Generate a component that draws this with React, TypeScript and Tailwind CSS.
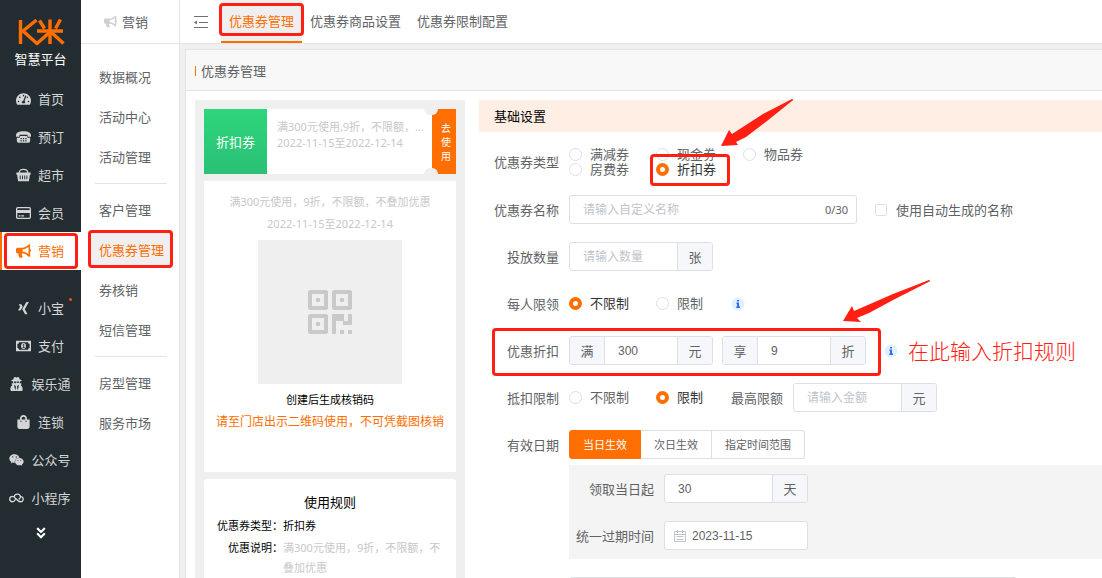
import { useState } from "react";
import type { ComponentType, ReactNode } from "react";
import {
    FaAngleDoubleDown,
    FaBullhorn,
    FaShoppingBag,
    FaTachometerAlt,
    FaUserSecret,
    FaWeixin,
    FaXing,
} from "react-icons/fa";

type IconProps = { className?: string };

type NavItem = {
    label: string;
    icon: ComponentType<IconProps>;
    dot?: boolean;
};

const PhoneIcon = ({ className }: IconProps) => (
    <svg viewBox="0 0 14 12" className={className} fill="currentColor">
        <path d="M0 4.6C0 1.6 3 .6 7 .6s7 1 7 4v1.2h-3.2V3.900H3.200v1.900H0z" />
        <path fillRule="evenodd" d="M4 5h6l.8 1.600h2.400v3.200q0 1.600-1.600 1.600H2.400Q.8 11.400.8 9.800V6.600h2.400zM4.200 7v1.200h1.200V7zm2.200 0v1.200h1.200V7zm2.200 0v1.200h1.200V7zM4.200 9v1.200h1.200V9zm2.200 0v1.200h1.200V9zm2.200 0v1.200h1.200V9z" />
    </svg>
);

const BasketIcon = ({ className }: IconProps) => (
    <svg viewBox="0 0 16 14" className={className}>
        <path d="M3.400 5C3.400 2 5 .9 8 .9S12.600 2 12.600 5" fill="none" stroke="currentColor" strokeWidth="1.300" />
        <path fill="currentColor" fillRule="evenodd" d="M.4 4.200h15.200v2.400h-.8l-1 7H2.200l-1-7H.4zM4 7.600v4h1v-4zm2.400 0v4h1v-4zm2.400 0v4h1v-4zm2.300 0v4h1v-4z" />
    </svg>
);

const CardIcon = ({ className }: IconProps) => (
    <svg viewBox="0 0 16 13" className={className}>
        <rect x=".7" y=".7" width="14.600" height="11.600" rx="1.200" fill="none" stroke="currentColor" strokeWidth="1.400" />
        <path d="M1 3.200h14v3.200H1zM2.800 9h2v1.300h-2zM5.600 9h3v1.300h-3z" fill="currentColor" />
    </svg>
);

const MoneyIcon = ({ className }: IconProps) => (
    <svg viewBox="0 0 16 11" className={className}>
        <path fill="currentColor" fillRule="evenodd" d="M0 0h16v11H0zM3.300 1.500Q3.300 3.300 1.500 3.300v4.400q1.800 0 1.800 1.800h9.400q0-1.800 1.800-1.800V3.300q-1.800 0-1.800-1.800z" />
        <ellipse cx="8" cy="5.500" rx="2.600" ry="3.200" fill="currentColor" />
        <path d="M7.200 4.200 8.200 3.600v3.600M7 7.200h2.200" fill="none" stroke="#232d31" strokeWidth=".9" />
    </svg>
);

const MiniProgramIcon = ({ className }: IconProps) => (
    <svg viewBox="0 0 16 10" className={className} fill="none" stroke="currentColor" strokeWidth="1.400" strokeLinecap="round">
        <path d="M6.800 6.600C6 8.200 5 9 3.700 9A2.900 2.900 0 0 1 3.700 3.200C6.500 3.200 8.500 9 12 9a2.800 2.800 0 0 0 1-5.500M5.600 3.500C6 1.700 7.300.9 8.900.9c2 0 3.300 1.500 3.300 3.100 0 1-.6 1.800-1.400 2.200" />
    </svg>
);

const CollapseIcon = ({ className }: IconProps) => (
    <svg viewBox="0 0 14 12" className={className}>
        <path d="M0 .5h14M5 6.500H14M0 11.500h14" stroke="currentColor" fill="none" />
        <path d="M0 6.500l3-2v4z" fill="currentColor" />
    </svg>
);

const QrIcon = ({ className }: IconProps) => (
    <svg viewBox="0 0 44 44" className={className} fill="#c9c9c9">
        <g fill="none" stroke="#c9c9c9" strokeWidth="4" strokeLinejoin="round">
            <path d="M2 2h16v16H2zM26 2h16v16H26zM2 26h16v16H2z" />
        </g>
        <circle cx="10" cy="10" r="2.300" />
        <circle cx="34" cy="10" r="2.300" />
        <circle cx="10" cy="34" r="2.300" />
        <path d="M25 24h11v7h4v-7h3q1 0 1 1v9q0 1-1 1h-8v-4h-7v12q0 1-1 1h-2q-1 0-1-1V25q0-1 1-1zM32 40h4v4h-4zM40 40h4v3q0 1-1 1h-3z" />
    </svg>
);

const CalendarIcon = ({ className }: IconProps) => (
    <svg viewBox="0 0 12 12" className={className} fill="none" stroke="#c0c4cc">
        <path d="M.5 1.500h11v10H.5zM.5 4.500h11M3.500 0v3M8.500 0v3M2.500 6.500h7M2.500 9.500h7" />
    </svg>
);

const Logo = () => (
    <svg viewBox="0 0 48 28" className="w-12 h-7" fill="none" stroke="#ff6e00" strokeWidth="3.400" strokeLinejoin="round">
        <path d="M3.500 2v24M19.500 2 6 13 20 25.500 33 14" />
        <path d="M22.500 2.500 27.500 10.500M43.500 1.500 38.500 10.500M20 13h26M33 1.500v24.500M34 14l12.500 11.500" />
    </svg>
);

const InfoIcon = () => (
    <svg viewBox="0 0 14 14" className="w-[14px] h-[14px] shrink-0">
        <circle cx="7" cy="7" r="6.500" fill="#e2efff" />
        <path d="M6 3h2v1.600H6zM5.500 5.600H8v4h1V11H5.300V9.600H6V7h-.5z" fill="#2d6cf6" />
    </svg>
);

const topNav: NavItem[] = [
    { label: "首页", icon: FaTachometerAlt },
    { label: "预订", icon: PhoneIcon },
    { label: "超市", icon: BasketIcon },
    { label: "会员", icon: CardIcon },
    { label: "营销", icon: FaBullhorn },
];

const bottomNav: NavItem[] = [
    { label: "小宝", icon: FaXing, dot: true },
    { label: "支付", icon: MoneyIcon },
    { label: "娱乐通", icon: FaUserSecret },
    { label: "连锁", icon: FaShoppingBag },
    { label: "公众号", icon: FaWeixin },
    { label: "小程序", icon: MiniProgramIcon },
];

const menuGroups = [
    ["数据概况", "活动中心", "活动管理"],
    ["客户管理", "优惠券管理", "券核销", "短信管理"],
    ["房型管理", "服务市场"],
];

const tabs = ["优惠券管理", "优惠券商品设置", "优惠券限制配置"];
const couponTypes = ["满减券", "现金券", "物品券", "房费券", "折扣券"];
const dateModes = ["当日生效", "次日生效", "指定时间范围"];

// Red frame drawn over its nearest positioned parent
const Mark = ({ className }: { className: string }) => (
    <span className={`absolute z-10 border-[3px] border-[#ff2013] rounded-[4px] pointer-events-none ${className}`} />
);

const SideLink = ({ item, active }: { item: NavItem; active?: boolean }) => {
    const Icon = item.icon;
    return (
        <a
            href="#"
            className={`relative flex items-center justify-center gap-[7px] pr-px h-[38px] ${active ? "bg-white text-[#ff6e00]" : "text-[#d3d5d6]"}`}
        >
            {active && <span className="absolute left-0 inset-y-0 w-[2px] bg-[#ff6e00]" />}
            <Icon className="w-[15px] h-[14px] shrink-0" />
            <span className="relative">
                {item.label}
                {item.dot && <span className="absolute -right-2 top-0 w-[3px] h-[3px] rounded-full bg-[#ff4a1a]" />}
            </span>
            {active && <Mark className="left-1 right-[3px] inset-y-[1px]" />}
        </a>
    );
};

const Row = ({ label, htmlFor, children }: { label: string; htmlFor?: string; children: ReactNode }) => (
    <div className="flex items-center gap-[10px] min-h-[29px]">
        <label htmlFor={htmlFor} className="w-20 shrink-0 text-right">{label}</label>
        {children}
    </div>
);

type RadioProps = {
    name: string;
    label: string;
    checked: boolean;
    onChange: () => void;
    children?: ReactNode;
};

const Radio = ({ name, label, checked, onChange, children }: RadioProps) => (
    <label className={`relative flex items-center gap-2 w-[87px] h-[15px] leading-[15px] ${checked ? "text-[#303133]" : ""}`}>
        <input
            type="radio"
            name={name}
            checked={checked}
            onChange={onChange}
            className="appearance-none w-[13px] h-[13px] shrink-0 rounded-full bg-white border border-[#dcdfe6] checked:border-4 checked:border-[#ff6e00]"
        />
        {label}
        {children}
    </label>
);

type UnitInputProps = {
    id?: string;
    label: string;
    prefix?: string;
    suffix: string;
    defaultValue?: string;
    placeholder?: string;
};

const UnitInput = ({ id, label, prefix, suffix, defaultValue, placeholder }: UnitInputProps) => (
    <div className="flex w-36 h-[29px] border border-[#dcdfe6] rounded-[3px] bg-white overflow-hidden">
        {prefix && (
            <span className="w-[35px] shrink-0 flex items-center justify-center bg-[#f5f7fa] border-r border-[#dcdfe6]">{prefix}</span>
        )}
        <input
            id={id}
            aria-label={label}
            defaultValue={defaultValue}
            placeholder={placeholder}
            className="flex-1 min-w-0 px-[13px] text-xs font-['Liberation_Sans','Noto_Sans_CJK_SC',sans-serif] placeholder:text-[#c0c4cc] focus:outline-none"
        />
        <span className="w-[35px] shrink-0 flex items-center justify-center bg-[#f5f7fa] border-l border-[#dcdfe6]">{suffix}</span>
    </div>
);

const CouponPreview = () => (
    <section className="w-[270px] shrink-0 bg-[#efefef] px-[9px] pt-[9px] flex flex-col gap-[7px] text-[11px]">
        <div className="flex h-[65px] bg-white shrink-0">
            <div className="w-[63px] shrink-0 flex items-center justify-center text-white text-[13px] bg-linear-to-b from-[#2dd67c] to-[#2bc076]">
                折扣券
            </div>
            <div className="flex-1 min-w-0 pl-[10px] pt-[10px] leading-4 text-[#c8c8c8] whitespace-nowrap">
                <p>满300元使用,9折，不限额，...</p>
                <p>2022-11-15至2022-12-14</p>
            </div>
            <button className="relative w-6 shrink-0 pl-1 bg-[#ff6e00] text-white text-[10px] leading-[14px]">
                <span className="block w-[10px] mx-auto">去使用</span>
                <span className="absolute -left-2 top-0 w-[14px] h-[6px] rounded-b-full bg-[#efefef]" />
                <span className="absolute -left-2 bottom-0 w-[14px] h-[6px] rounded-t-full bg-[#efefef]" />
            </button>
        </div>

        <div className="bg-white h-[291px] shrink-0 pt-[10px] flex flex-col items-center text-center leading-[22px]">
            <p className="text-[#c8c8c8]">满300元使用，9折，不限额，不叠加优惠</p>
            <p className="text-[#c8c8c8]">2022-11-15至2022-12-14</p>
            <div className="w-36 h-36 mt-[5px] mb-[5px] bg-[#efefef] flex items-center justify-center">
                <QrIcon className="w-11 h-11" />
            </div>
            <p className="text-black">创建后生成核销码</p>
            <p className="text-xs leading-[22px] text-[#ff6e00] whitespace-nowrap">请至门店出示二维码使用，不可凭截图核销</p>
        </div>

        <div className="bg-white rounded-t-[3px] flex-1 px-[13px] pt-3 text-black">
            <h3 className="text-[13px] leading-[22px] text-center">使用规则</h3>
            <dl className="grid grid-cols-[66px_1fr] gap-y-[2px] mt-[3px] leading-5">
                <dt className="text-right whitespace-nowrap">优惠券类型：</dt>
                <dd>折扣券</dd>
                <dt className="text-right whitespace-nowrap">优惠说明：</dt>
                <dd className="text-[#c8c8c8]">满300元使用，9折，不限额，不叠加优惠</dd>
            </dl>
        </div>
    </section>
);

const CouponForm = () => {
    const [type, setType] = useState("折扣券");
    const [name, setName] = useState("");
    const [claimLimited, setClaimLimited] = useState(false);
    const [deductLimited, setDeductLimited] = useState(true);
    const [dateMode, setDateMode] = useState("当日生效");

    return (
        <section className="flex-1 min-w-0">
            <h2 className="h-8 flex items-center px-[15px] bg-[#feeee3] text-black">基础设置</h2>

            <form className="flex flex-col gap-[18px] pt-[15px]" onSubmit={(e) => e.preventDefault()}>
                <Row label="优惠券类型">
                    <div className="relative grid grid-cols-[87px_87px_87px]">
                        {couponTypes.map((t) => (
                            <Radio key={t} name="type" label={t} checked={type === t} onChange={() => setType(t)}>
                                {t === "折扣券" && <Mark className="-left-[6px] -top-2 w-20 h-8" />}
                            </Radio>
                        ))}
                        <svg viewBox="0 0 72 48" className="absolute z-10 left-[152px] -top-12 w-[72px] h-12" fill="#ff2013">
                            <path d="M71 0Q73 0 71.500 1.500L46 22 25 38 15 43l2 3L0 47 8 31l3 4L42 15Z" />
                        </svg>
                    </div>
                </Row>

                <Row label="优惠券名称" htmlFor="coupon-name">
                    <div className="flex items-center w-72 h-[29px] pr-2 border border-[#dcdfe6] rounded-[3px] bg-white">
                        <input
                            id="coupon-name"
                            maxLength={30}
                            value={name}
                            onChange={(e) => setName(e.target.value)}
                            placeholder="请输入自定义名称"
                            className="flex-1 min-w-0 pl-[13px] text-xs placeholder:text-[#c0c4cc] focus:outline-none"
                        />
                        <span className="text-[11px]">{name.length}/30</span>
                    </div>
                    <label className="flex items-center gap-[9px] ml-2">
                        <input type="checkbox" className="appearance-none w-3 h-3 bg-white border border-[#dcdfe6] rounded-[2px] checked:bg-[#ff6e00]" />
                        使用自动生成的名称
                    </label>
                </Row>

                <Row label="投放数量" htmlFor="coupon-count">
                    <UnitInput id="coupon-count" label="投放数量" suffix="张" placeholder="请输入数量" />
                </Row>

                <Row label="每人限领">
                    <div className="flex items-center">
                        <Radio name="claim" label="不限制" checked={!claimLimited} onChange={() => setClaimLimited(false)} />
                        <Radio name="claim" label="限制" checked={claimLimited} onChange={() => setClaimLimited(true)} />
                    </div>
                    <span className="-ml-[22px]">
                        <InfoIcon />
                    </span>
                </Row>

                <div className="relative">
                    <Row label="优惠折扣" htmlFor="discount-over">
                        <div className="flex gap-[9px]">
                            <UnitInput id="discount-over" label="满" prefix="满" suffix="元" defaultValue="300" />
                            <UnitInput label="享" prefix="享" suffix="折" defaultValue="9" />
                        </div>
                        <span className="ml-2">
                            <InfoIcon />
                        </span>
                        <strong className="text-[21px] font-light text-[#ff2013] whitespace-nowrap">在此输入折扣规则</strong>
                    </Row>
                    <Mark className="left-[13px] -top-2 w-[389px] h-12" />
                    <svg viewBox="0 0 88 42" className="absolute z-10 left-[364px] -top-14 w-[88px] h-[42px]" fill="#ff2013">
                        <path d="M86 0Q88 0 86.500 1.500L52 19 26 33 14 38l4 4L0 41 9 26l2 5L50 14Z" />
                    </svg>
                </div>

                <Row label="抵扣限制">
                    <div className="flex items-center">
                        <Radio name="deduct" label="不限制" checked={!deductLimited} onChange={() => setDeductLimited(false)} />
                        <Radio name="deduct" label="限制" checked={deductLimited} onChange={() => setDeductLimited(true)} />
                    </div>
                    <label htmlFor="max-amount" className="-ml-[22px]">最高限额</label>
                    <UnitInput id="max-amount" label="最高限额" suffix="元" placeholder="请输入金额" />
                </Row>

                <div className="flex flex-col gap-[6px]">
                    <Row label="有效日期">
                        <div className="flex h-[29px] text-[11px]">
                            {dateModes.map((mode) => (
                                <button
                                    key={mode}
                                    type="button"
                                    onClick={() => setDateMode(mode)}
                                    className={`px-[13px] border border-l-0 first:border-l first:rounded-l-[3px] last:rounded-r-[3px] ${mode === dateMode
                                        ? "bg-[#ff6e00] border-[#ff6e00] text-white"
                                        : "bg-white border-[#dcdfe6]"
                                        }`}
                                >
                                    {mode}
                                </button>
                            ))}
                        </div>
                    </Row>
                    <div className="ml-[90px] py-[9px] flex flex-col gap-[18px] bg-[#f4f4f4]">
                        <div className="flex items-center gap-[10px]">
                            <label htmlFor="valid-days" className="w-[85px] text-right">领取当日起</label>
                            <UnitInput id="valid-days" label="领取当日起" suffix="天" defaultValue="30" />
                        </div>
                        <div className="flex items-center gap-[10px]">
                            <label htmlFor="expire-date" className="w-[85px] text-right">统一过期时间</label>
                            <div className="flex items-center gap-[6px] w-36 h-[29px] pl-[9px] border border-[#dcdfe6] rounded-[3px] bg-white">
                                <CalendarIcon className="w-3 h-3 shrink-0" />
                                <input
                                    id="expire-date"
                                    defaultValue="2023-11-15"
                                    className="flex-1 min-w-0 text-xs font-['Liberation_Sans',sans-serif] focus:outline-none"
                                />
                            </div>
                        </div>
                    </div>
                </div>

                <textarea aria-label="优惠说明" className="ml-[90px] w-[448px] h-20 border border-[#dcdfe6] rounded-[3px] resize-none" />
            </form>
        </section>
    );
};

export default function App() {
    return (
        <div className="flex h-screen overflow-hidden bg-white text-[13px] leading-5 text-[#606266] font-['Noto_Sans','Noto_Sans_CJK_SC',sans-serif]">
            {/* Primary navigation */}
            <nav className="w-[81px] shrink-0 bg-[#232d31] flex flex-col">
                <div className="h-20 shrink-0 pt-[18px] flex flex-col items-center gap-[3px] text-white">
                    <Logo />
                    <span>智慧平台</span>
                </div>
                {topNav.map((item) => (
                    <SideLink key={item.label} item={item} active={item.label === "营销"} />
                ))}
                <div className="h-[19px] shrink-0" />
                {bottomNav.map((item) => (
                    <SideLink key={item.label} item={item} />
                ))}
                <button aria-label="更多" className="h-8 shrink-0 flex items-center justify-center text-white">
                    <FaAngleDoubleDown className="w-[14px] h-[14px]" />
                </button>
            </nav>

            {/* Secondary menu */}
            <aside className="w-[99px] shrink-0 border-r border-[#e4e4e4]">
                <div className="h-11 flex items-center justify-center gap-[5px] pr-2 border-b border-[#e4e4e4]">
                    <FaBullhorn className="w-[13px] h-[13px] text-[#cfcfcf]" />
                    营销
                </div>
                <div className="pt-[13px] pl-[14px] pr-3">
                    {menuGroups.map((group, index) => (
                        <div key={group[0]} className={index > 0 ? "mt-[6px] pt-[6px] border-t border-[#e4e4e4]" : ""}>
                            {group.map((label) => {
                                const active = label === "优惠券管理";
                                return (
                                    <a key={label} href="#" className="relative flex items-center h-10 whitespace-nowrap">
                                        {active && <span className="absolute -left-[5px] -right-[5px] inset-y-[2px] bg-[#efefef]" />}
                                        <span className={`relative pl-1 ${active ? "text-[#ff6e00]" : ""}`}>{label}</span>
                                        {active && <Mark className="-left-[7px] -right-[6px] top-0 bottom-[2px]" />}
                                    </a>
                                );
                            })}
                        </div>
                    ))}
                </div>
            </aside>

            <main className="flex-1 min-w-0 flex flex-col">
                <header className="h-11 shrink-0 flex items-center border-b border-[#e4e4e4] pl-[14px]">
                    <button aria-label="收起菜单" className="mr-[13px] text-[#707070]">
                        <CollapseIcon className="w-[14px] h-3" />
                    </button>
                    {tabs.map((tab, index) => (
                        <a
                            key={tab}
                            href="#"
                            className={`relative h-full px-2 flex items-center border-b-2 ${index === 0 ? "bg-[#efefef] border-[#ff6e00] text-[#ff6e00]" : "border-transparent"}`}
                        >
                            {tab}
                            {index === 0 && <Mark className="-left-[2px] -right-[2px] top-[3px] bottom-[5px]" />}
                        </a>
                    ))}
                </header>

                <div className="flex-1 min-h-0 pl-[5px] pt-[5px] bg-[#f0f0f0]">
                    <div className="h-full flex flex-col bg-white border-l border-t border-[#e4e4e4]">
                        <h1 className="h-[41px] shrink-0 flex items-center gap-[5px] pl-[9px] pt-[2px] bg-[#f8f8f8] border-b border-[#e4e4e4]">
                            <span className="w-px h-[10px] bg-[#ff6e00]" />
                            优惠券管理
                        </h1>
                        <div className="flex-1 min-h-0 flex gap-[14px] pt-[9px] pl-[9px]">
                            <CouponPreview />
                            <CouponForm />
                        </div>
                    </div>
                </div>
            </main>
        </div>
    );
}
